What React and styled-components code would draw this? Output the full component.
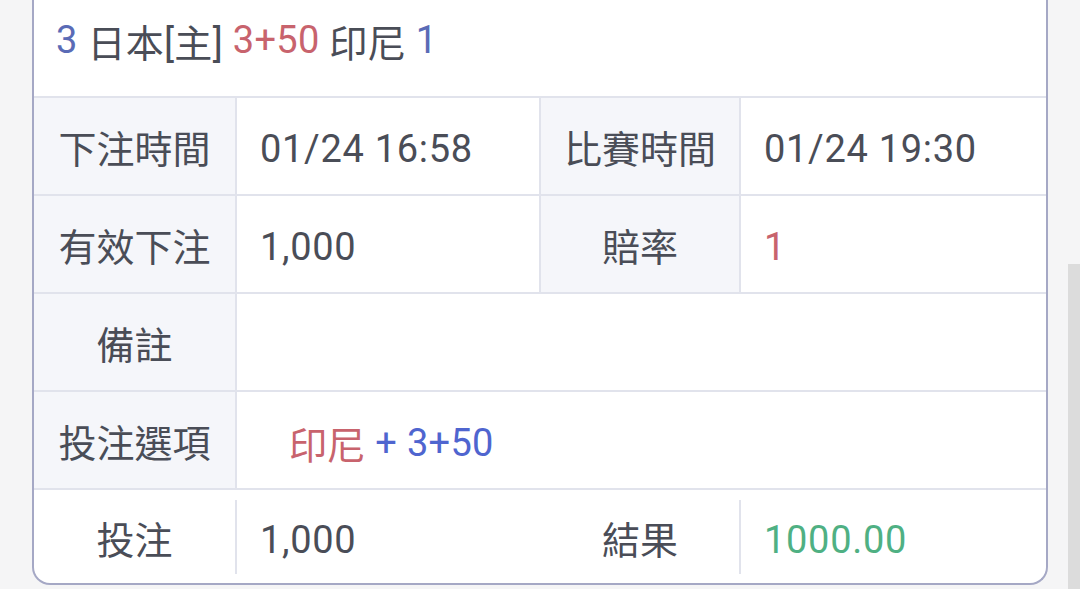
import React from "react";
import styled, { createGlobalStyle } from "styled-components";

const Global = createGlobalStyle`
  html, body { margin: 0; padding: 0; }
  body {
    background: #f5f5f6;
    font-family: Roboto, "Noto Sans CJK TC", "Noto Sans", sans-serif;
    color: #4a4d57;
    overflow: hidden;
  }
  * { box-sizing: border-box; }
`;

const Page = styled.div`
  position: relative;
  width: 1080px;
  height: 589px;
  padding: 0 32px;
`;

const Card = styled.div`
  background: #ffffff;
  border: 2px solid #a5a8c5;
  border-top: none;
  border-radius: 0 0 18px 18px;
  overflow: hidden;
`;

const TitleRow = styled.div`
  height: 96px;
  display: flex;
  align-items: center;
  padding: 0 0 16px 22px;
  font-size: 38px;
  white-space: pre;
  letter-spacing: 0.3px;
`;

const Tone = styled.span`
  color: ${(p) =>
    p.$tone === "blue"
      ? "#5a6bb6"
      : p.$tone === "red"
      ? "#c8636d"
      : p.$tone === "bright"
      ? "#4f65cf"
      : p.$tone === "green"
      ? "#4fb083"
      : "#4a4d57"};
`;

const Row = styled.div`
  display: grid;
  grid-template-columns: 203px 304px 200px 1fr;
  height: ${(p) => (p.$last ? "95px" : "98px")};
  border-top: 2px solid #e1e3ec;
  padding: ${(p) => (p.$last ? "10px 0 9px" : "0")};
`;

const Cell = styled.div`
  display: flex;
  align-items: center;
  font-size: 38px;
  white-space: pre;
  border-right: ${(p) => (p.$end ? "none" : "2px solid #e1e3ec")};
  grid-column: ${(p) => (p.$span ? `span ${p.$span}` : "auto")};
`;

const Label = styled(Cell)`
  justify-content: center;
  background: ${(p) => (p.$plain ? "transparent" : "#f5f6fa")};
`;

const Value = styled(Cell)`
  padding-left: ${(p) => (p.$indent ? "52px" : "23px")};
  padding-top: 5px;
  letter-spacing: ${(p) => (p.$indent ? "0.3px" : "0.7px")};
`;

const Scroll = styled.div`
  position: absolute;
  right: 0;
  top: 264px;
  width: 12px;
  bottom: 0;
  background: #dcdcdc;
`;

export default function App() {
  return (
    <>
      <Global />
      <Page>
        <Card>
          <TitleRow>
            <Tone $tone="blue">3</Tone>
            <Tone> 日本[主] </Tone>
            <Tone $tone="red">3+50</Tone>
            <Tone> 印尼 </Tone>
            <Tone $tone="blue">1</Tone>
          </TitleRow>
          <Row>
            <Label>下注時間</Label>
            <Value>01/24 16:58</Value>
            <Label>比賽時間</Label>
            <Value $end>01/24 19:30</Value>
          </Row>
          <Row>
            <Label>有效下注</Label>
            <Value>1,000</Value>
            <Label>賠率</Label>
            <Value $end>
              <Tone $tone="red">1</Tone>
            </Value>
          </Row>
          <Row>
            <Label>備註</Label>
            <Value $span={3} $end></Value>
          </Row>
          <Row>
            <Label>投注選項</Label>
            <Value $span={3} $end $indent>
              <Tone $tone="red">印尼</Tone>
              <Tone $tone="bright"> + 3+50</Tone>
            </Value>
          </Row>
          <Row $last>
            <Label $plain>投注</Label>
            <Value $end>1,000</Value>
            <Label $plain>結果</Label>
            <Value $end>
              <Tone $tone="green">1000.00</Tone>
            </Value>
          </Row>
        </Card>
        <Scroll />
      </Page>
    </>
  );
}
